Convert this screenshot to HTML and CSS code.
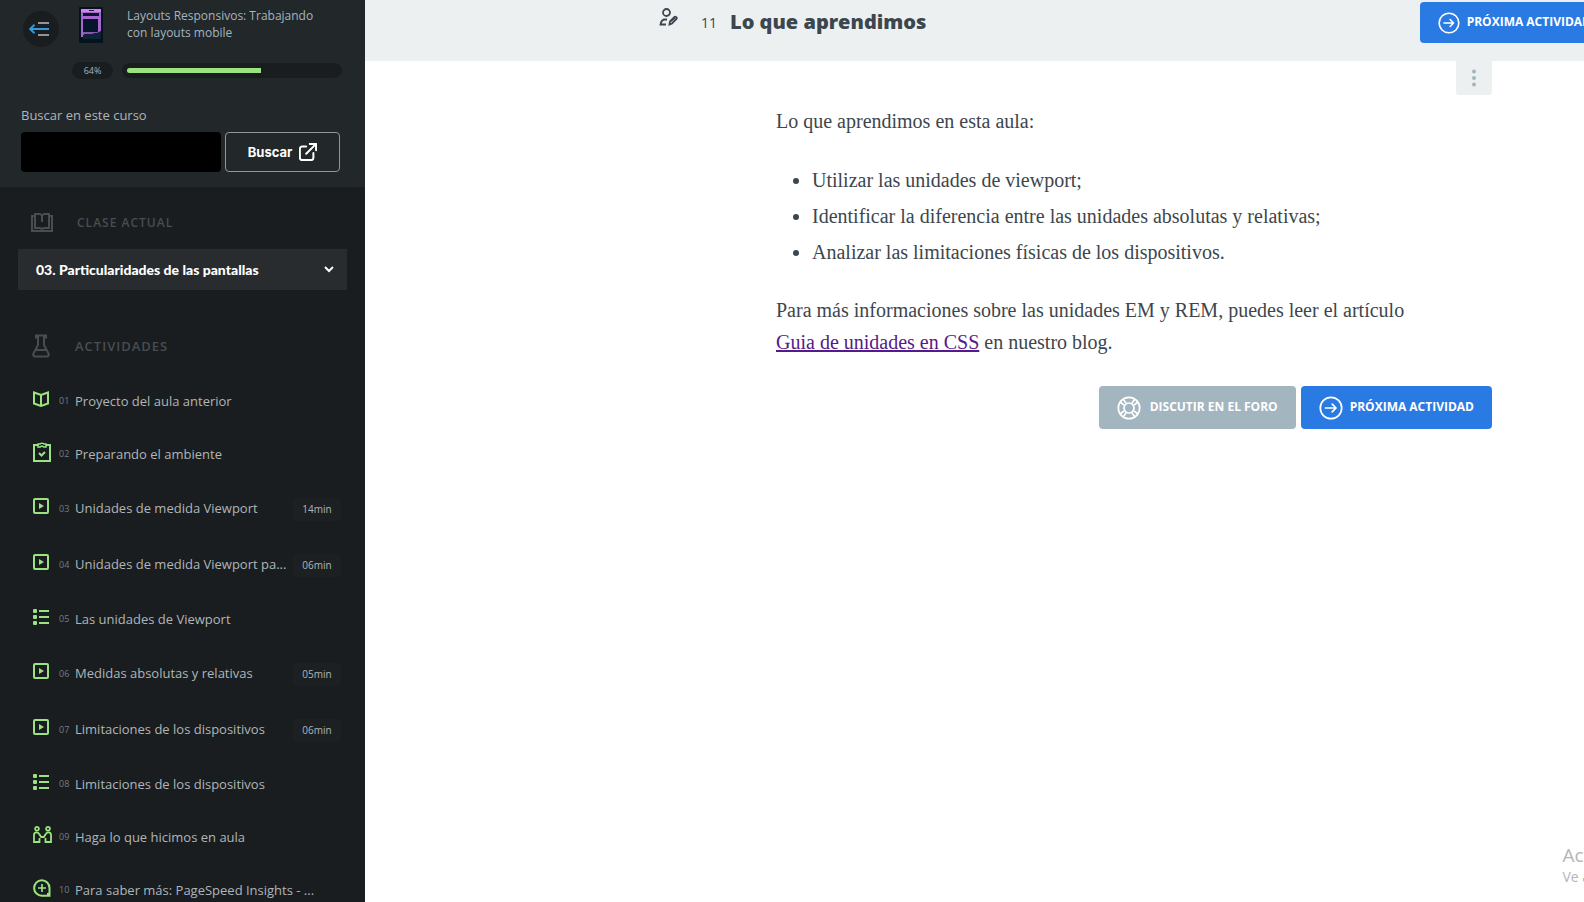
FILE: index.html
```html
<!DOCTYPE html>
<html lang="es">
<head>
<meta charset="utf-8">
<meta name="viewport" content="width=device-width, initial-scale=1">
<title>Lo que aprendimos</title>
<link rel="stylesheet" href="styles.css">
</head>
<body>
<svg class="sprite" aria-hidden="true">
  <symbol id="play" viewBox="0 0 16 16"><rect x="1" y="1" width="14" height="14" rx="1" fill="none" stroke="currentColor" stroke-width="2"/><path d="M6 5l5 3-5 3z" fill="currentColor"/></symbol>
  <symbol id="list" viewBox="0 0 16 16"><g fill="currentColor"><rect width="4" height="4" rx="1"/><rect y="6" width="4" height="4" rx="1"/><rect y="12" width="4" height="4" rx="1"/><path d="M6 1h10v2H6zM6 7h10v2H6zM6 13h10v2H6z"/></g></symbol>
  <symbol id="next" viewBox="0 0 24 24"><g fill="none" stroke="currentColor" stroke-width="1.7" stroke-linecap="round" stroke-linejoin="round"><circle cx="12" cy="12" r="10.7"/><path d="M6.5 12h10.500M13.200 8.200L17 12l-3.800 3.800"/></g></symbol>
</svg>
<div class="app">
  <aside class="sidebar">
    <header class="course">
      <div class="course-top">
        <button class="collapse" type="button" aria-label="Cerrar menú">
          <svg width="20" height="14" viewBox="0 0 20 14" fill="none" stroke-width="1.600"><path d="M9 1h11M9 13h11" stroke="#b6bdc1"/><path d="M20 7H1.500M5.500 2.800L1.200 7l4.300 4.200" stroke="#3498db" stroke-width="2"/></svg>
        </button>
        <svg class="thumb" width="24" height="36" viewBox="0 0 24 36"><rect width="24" height="36" rx="1" fill="#05121f"/><path d="M2 2h20v22l-2 2H6l-2 4H2z" fill="#a567cf"/><path d="M2 2h20v3H2z" fill="#cf83ec"/><path d="M4 6h16v3H4zM4 12h15v13H4z" fill="#06152a"/><path d="M10 3h5v1h-5z" fill="#2b173d"/><path d="M4 32v-4c6-2 11 0 18-4v8z" fill="#0c2434"/><path d="M4 25h15l-6 2H4z" fill="#8a55b5"/></svg>
        <a class="course-name" href="#">Layouts Responsivos: Trabajando con layouts mobile</a>
      </div>
      <div class="progress">
        <span class="percent">64%</span>
        <div class="track"><div class="fill" style="width:64%"></div></div>
      </div>
      <form class="search">
        <label for="q">Buscar en este curso</label>
        <div class="search-row">
          <input id="q" type="text">
          <button type="button">Buscar
            <svg width="18" height="18" viewBox="0 0 20 20" fill="none" stroke="currentColor" stroke-width="2.200" stroke-linecap="round" stroke-linejoin="round"><path d="M8 4H3.500A2.500 2.500 0 0 0 1 6.500v10A2.500 2.500 0 0 0 3.500 19h10a2.500 2.500 0 0 0 2.500-2.500V11M12 1h7v7M19 1L8 12"/></svg>
          </button>
        </div>
      </form>
    </header>
    <section class="current">
      <h2><svg width="22" height="20" viewBox="0 0 22 20" fill="none" stroke="currentColor" stroke-width="2"><path d="M4 3H1v15h20V3h-3M4 15V1h5l2 1.500L13 1h5v14h-5l-2 1-2-1zM11 2v7"/></svg><label for="lesson">CLASE ACTUAL</label></h2>
      <div class="select">
        <select id="lesson"><option>03. Particularidades de las pantallas</option></select>
        <svg width="10" height="7" viewBox="0 0 10 7" fill="none" stroke="#fff" stroke-width="2"><path d="M1 1l4 4 4-4"/></svg>
      </div>
    </section>
    <section class="activities">
      <h2><svg width="18" height="24" viewBox="0 0 18 24" fill="none" stroke="currentColor" stroke-width="2"><path d="M4 1.500h10v2h-2V11l4.500 8.500c.7 1.500 0 3-1.500 3H3c-1.500 0-2.200-1.500-1.500-3L6 11V3.500H4zM4 16h10"/></svg>ACTIVIDADES</h2>
      <ul>
        <li><a href="#"><svg width="16" height="16" viewBox="0 0 16 16" fill="none" stroke="currentColor" stroke-width="2"><path d="M1 1.500L8 4l7-2.500v11L8 15l-7-2.500zM8 4v11"/></svg><span class="num">01</span><span class="name">Proyecto del aula anterior</span></a></li>
        <li><a href="#"><svg width="18" height="20" viewBox="0 0 18 20" fill="none" stroke="currentColor" stroke-width="2"><path d="M5 3H1v16h16V3h-4"/><path d="M5 5V2h2c0-1 4-1 4 0h2v3h-2L9 4 7 5z" stroke-width="1.500"/><path d="M6 11l2.500 2.500L12 10"/></svg><span class="num">02</span><span class="name">Preparando el ambiente</span></a></li>
        <li class="video"><a href="#"><svg width="16" height="16"><use href="#play"/></svg><span class="num">03</span><span class="name">Unidades de medida Viewport</span><span class="time">14min</span></a></li>
        <li class="video"><a href="#"><svg width="16" height="16"><use href="#play"/></svg><span class="num">04</span><span class="name">Unidades de medida Viewport pa...</span><span class="time">06min</span></a></li>
        <li><a href="#"><svg width="16" height="16"><use href="#list"/></svg><span class="num">05</span><span class="name">Las unidades de Viewport</span></a></li>
        <li class="video"><a href="#"><svg width="16" height="16"><use href="#play"/></svg><span class="num">06</span><span class="name">Medidas absolutas y relativas</span><span class="time">05min</span></a></li>
        <li class="video"><a href="#"><svg width="16" height="16"><use href="#play"/></svg><span class="num">07</span><span class="name">Limitaciones de los dispositivos</span><span class="time">06min</span></a></li>
        <li><a href="#"><svg width="16" height="16"><use href="#list"/></svg><span class="num">08</span><span class="name">Limitaciones de los dispositivos</span></a></li>
        <li><a href="#"><svg width="19" height="17" viewBox="0 0 19 17" fill="none" stroke="currentColor" stroke-width="1.800"><circle cx="4" cy="2.800" r="1.900"/><circle cx="15" cy="2.800" r="1.900"/><path d="M6.500 12v4H1V9c0-3.500 4.500-3.500 5.500-.5L8.200 11h2.600l1.700-2.500c1-3 5.500-3 5.500.5v7h-5.500v-4"/></svg><span class="num">09</span><span class="name">Haga lo que hicimos en aula</span></a></li>
        <li><a href="#"><svg width="18" height="18" viewBox="0 0 18 18" fill="none" stroke="currentColor" stroke-width="2"><path d="M16.500 9A7.700 7.700 0 1 0 9 16.700h7.500z"/><path d="M14 14h3v3h-3z" fill="currentColor" stroke="none"/><path d="M9 5v8M5 9h8" stroke-width="1.700"/></svg><span class="num">10</span><span class="name">Para saber más: PageSpeed Insights - ...</span></a></li>
      </ul>
    </section>
  </aside>
  <main class="main">
    <header class="topbar">
      <svg class="kind" width="19" height="18" viewBox="0 0 19 18" fill="none" stroke="currentColor" stroke-width="1.800"><circle cx="7.500" cy="4.500" r="3.500"/><path d="M8 11.500H6c-2.500 0-4 2-4.500 5H7M10.500 16.500l.5-3 4.500-4.500c1-1 3 .5 2 2L13 15.500zM12 13l4-3.500"/></svg>
      <span class="order">11</span>
      <h1>Lo que aprendimos</h1>
      <a class="btn primary" href="#"><svg width="22" height="22"><use href="#next"/></svg><span>PRÓXIMA ACTIVIDAD</span></a>
    </header>
    <div class="column">
      <button class="more" type="button" aria-label="Más opciones"><svg width="4" height="18" viewBox="0 0 4 18" fill="#a3b5bf"><circle cx="2" cy="2.500" r="2"/><circle cx="2" cy="9" r="2"/><circle cx="2" cy="15.500" r="2"/></svg></button>
      <article>
        <p>Lo que aprendimos en esta aula:</p>
        <ul>
          <li>Utilizar las unidades de viewport;</li>
          <li>Identificar la diferencia entre las unidades absolutas y relativas;</li>
          <li>Analizar las limitaciones físicas de los dispositivos.</li>
        </ul>
        <p>Para más informaciones sobre las unidades EM y REM, puedes leer el artículo <br><a href="#">Guia de unidades en CSS</a> en nuestro blog.</p>
      </article>
      <div class="actions">
        <a class="btn forum" href="#"><svg width="24" height="24" viewBox="0 0 24 24" fill="none" stroke="currentColor" stroke-width="1.700"><circle cx="12" cy="12" r="10.700"/><circle cx="12" cy="12" r="5"/><path d="M7 9L3 6M9 7L6 3M15 7l3-4M17 9l4-3M17 15l4 3M15 17l3 4M9 17l-3 4M7 15l-4 3"/></svg><span>DISCUTIR EN EL FORO</span></a>
        <a class="btn primary" href="#"><svg width="24" height="24"><use href="#next"/></svg><span>PRÓXIMA ACTIVIDAD</span></a>
      </div>
    </div>
    <div class="watermark"><span class="wm-title">Ac</span><span>Ve a</span></div>
  </main>
</div>
</body>
</html>
```

FILE: styles.css
```css
* { box-sizing: border-box; }
body { margin: 0; font-family: "Open Sans", sans-serif; font-size: 13px; background: #fff; }
ul, h1, h2, p { margin: 0; padding: 0; }
svg { flex: none; display: block; }
a { text-decoration: none; color: inherit; }
.sprite { display: none; }
.app { display: flex; height: 100vh; overflow: hidden; }

.sidebar { flex: none; width: 365px; background: #191d20; color: #b0b5b8; overflow: hidden; }
.course { background: #22272a; padding: 7px 25px 15px 21px; }
.course-top { display: flex; align-items: flex-start; }
.collapse { width: 36px; height: 36px; margin: 4px 20px 0 2px; padding: 0 4px 0 0; border: 0; border-radius: 50%; background: #191d20; display: grid; place-items: center; }
.course-name { width: 200px; margin-left: 24px; font-size: 12px; line-height: 17px; color: #a3b5bf; }
.progress { display: flex; align-items: center; gap: 9px; margin: 15px 0 0 51px; }
.percent { width: 41px; border-radius: 9px; background: #191d20; color: #a3b5bf; font-size: 9px; line-height: 17px; text-align: center; }
.track { flex: 1; margin-right: -2px; padding: 5px; border-radius: 8px; background: #191d20; }
.fill { height: 5px; border-radius: 3px 0 0 3px; background: #9be37f; }
.search { margin-top: 26px; }
.search label { display: block; line-height: 20px; }
.search-row { display: flex; gap: 4px; margin-top: 7px; }
.search input { flex: 1; min-width: 0; height: 40px; border: 0; border-radius: 4px; background: #000; color: #fff; padding: 0 12px; }
.search button { width: 115px; height: 40px; display: flex; align-items: center; justify-content: center; gap: 7px; border: 1px solid #90969a; border-radius: 4px; background: transparent; color: #fff; font: 700 13px Inter, sans-serif; }
.sidebar h2 { display: flex; align-items: center; color: #474d51; font-size: 12px; font-weight: 600; letter-spacing: 1px; line-height: 24px; }
.current { padding: 24px 18px 0; }
.current h2 { gap: 24px; margin: 0 0 14px 13px; }
.select { display: grid; align-items: center; background: #282c2f; }
.select select { grid-area: 1 / 1; appearance: none; width: 100%; height: 41px; border: 0; padding: 0 18px; background: transparent; color: #fff; font: 900 14px Lato, sans-serif; }
.select svg { grid-area: 1 / 1; justify-self: end; margin-right: 13px; pointer-events: none; }
.activities { padding: 44px 24px 0 32px; }
.activities h2 { gap: 25px; margin-bottom: 16px; font-size: 13px; }
.activities ul { list-style: none; }
.activities li a { display: grid; grid-template-columns: 27px 16px 1fr auto; align-items: center; height: 53px; }
.activities li.video a { height: 56px; }
.activities li svg { color: #9be37f; margin: 0 0 4px 1px; }
.num { font-size: 9px; color: #767c80; }
.name { white-space: nowrap; }
.time { width: 48px; margin-top: 2px; border-radius: 3px; background: #1c2023; font-size: 10px; line-height: 23px; text-align: center; }

.main { position: relative; flex: 1; min-width: 0; overflow: hidden; color: #3d464d; }
.topbar { display: flex; align-items: flex-start; height: 61px; padding: 2px 0 0 294px; background: #ecf0f1; }
.kind { margin-top: 6px; }
.order { margin-left: 23px; font-size: 14px; line-height: 42px; }
h1 { margin-left: 13px; font-size: 20px; font-weight: 800; line-height: 40px; white-space: nowrap; }
.btn { display: flex; align-items: center; gap: 7px; height: 43px; padding: 0 18px; border-radius: 4px; color: #fff; font-size: 12px; font-weight: 700; white-space: nowrap; }
.btn span { padding-bottom: 3px; }
.topbar .btn { height: 41px; margin: 0 -25px 0 auto; }
.primary { background: #2a7ae4; }
.forum { gap: 9px; background: #a3b5bf; }
.column { width: 716px; max-width: 100%; margin: 0 92px 0 auto; display: flex; flex-direction: column; }
.more { align-self: flex-end; width: 36px; height: 34px; border: 0; border-radius: 0 0 3px 3px; background: #ecf0f1; display: grid; place-items: center; }
article { margin-top: 10px; font-family: "Source Serif Pro", "Liberation Serif", serif; font-size: 20px; line-height: 32px; }
article ul { margin: 27px 0 26px; padding-left: 36px; }
article li + li { margin-top: 4px; }
article a { color: #551a8b; text-decoration: underline; }
.actions { display: flex; justify-content: flex-end; gap: 5px; margin-top: 28px; }
.watermark { position: absolute; right: -6px; bottom: 15px; display: flex; flex-direction: column; color: #b5b5b5; font-size: 14px; line-height: 20px; white-space: nowrap; }
.wm-title { font-size: 19px; line-height: 24px; }
```
